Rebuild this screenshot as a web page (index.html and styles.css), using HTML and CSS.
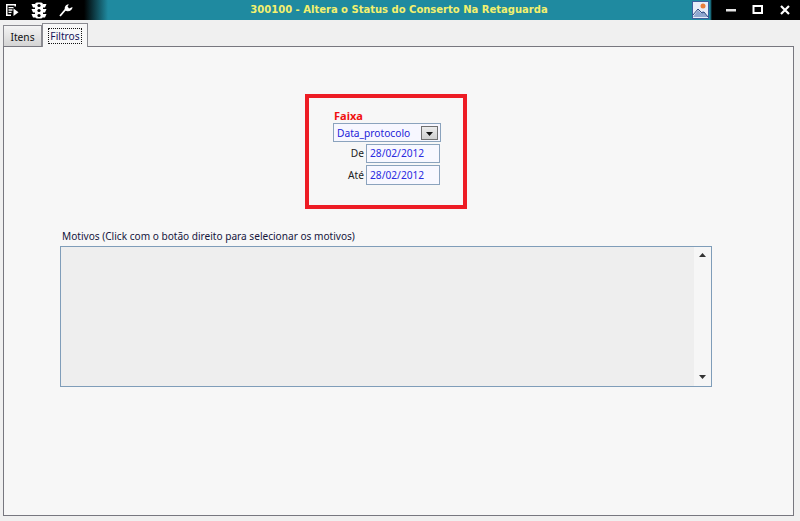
FILE: index.html
```html
<!DOCTYPE html>
<html lang="pt">
<head>
<meta charset="utf-8">
<title>300100 - Altera o Status do Conserto Na Retaguarda</title>
<link rel="stylesheet" href="styles.css">
</head>
<body>
<header class="titlebar">
  <div class="tools">
    <svg class="ico" width="14" height="14" viewBox="0 0 14 14"><path d="M1 1h10v2.500H9.500V2.500h-7v9H6V13H1z" fill="#fff"/><path d="M3.500 4.700h5M3.500 7h4M3.500 9.300h3" stroke="#fff" stroke-width="1.300"/><path d="M8.500 5.500l5 3.700-5 3.800z" fill="#fff"/></svg>
    <svg class="ico" width="16" height="17" viewBox="0 0 16 17"><rect x="4" y="0.500" width="8" height="16" rx="2" fill="#fff"/><path d="M0.500 2h3.500v3.500H2zM15.500 2H12v3.500h2zM0.500 7h3.500v3.500H2zM15.500 7H12v3.500h2zM0.500 12h3.500v3.500H2zM15.500 12H12v3.500h2z" fill="#fff"/><circle cx="8" cy="3.500" r="1.600" fill="#000"/><circle cx="8" cy="8.500" r="1.600" fill="#000"/><circle cx="8" cy="13.500" r="1.600" fill="#000"/></svg>
    <svg class="ico" width="14" height="14" viewBox="0 0 14 14"><path d="M1 13L6.500 6.500" stroke="#fff" stroke-width="1.800" fill="none"/><path d="M6 7.500C5 3.500 7 1 10 1.500L8.500 3.300 10 5.500 13.500 4C13.500 7 10.500 8.800 7.500 8z" fill="#fff"/></svg>
  </div>
  <h1 class="title">300100 - Altera o Status do Conserto Na Retaguarda</h1>
  <div class="winctl">
    <svg class="photo" width="17" height="18" viewBox="0 0 17 18"><rect x="0.500" y="0.500" width="16" height="17" fill="#e8eef8" stroke="#3b5f9c"/><path d="M1 16l5-7 3 3 2-2 5 6z" fill="#8fa8cf"/><path d="M1 14l5-6 4 4 2-1 4 5" fill="none" stroke="#2c4a80"/><circle cx="11" cy="5" r="2.500" fill="#e8803a"/></svg>
    <svg class="btn" width="12" height="12" viewBox="0 0 12 12"><rect x="1" y="5" width="10" height="2.500" fill="#e4e4e4"/></svg>
    <svg class="btn" width="12" height="12" viewBox="0 0 12 12"><rect x="1.500" y="2" width="8.500" height="7" fill="none" stroke="#fff" stroke-width="2"/></svg>
    <svg class="btn" width="12" height="12" viewBox="0 0 12 12"><path d="M2 2l8 8M10 2l-8 8" stroke="#fff" stroke-width="2.200"/></svg>
  </div>
</header>

<nav class="tabs">
  <div class="tab">Itens</div>
  <div class="tab tab-active"><span class="focus">Filtros</span></div>
</nav>

<main class="panel">
  <section class="range">
    <div class="range-title">Faixa</div>
    <div class="combo"><span>Data_protocolo</span><span class="combo-btn"><svg width="7" height="4" viewBox="0 0 7 4"><path d="M0 0h7L3.500 4z" fill="#111"/></svg></span></div>
    <div class="row"><label class="lbl">De</label><div class="date">28/02/2012</div></div>
    <div class="row row-last"><label class="lbl">Até</label><div class="date">28/02/2012</div></div>
  </section>
  <div class="motivos-label">Motivos (Click com o botão direito para selecionar os motivos)</div>
  <div class="motivos">
    <div class="list"></div>
    <div class="scroll">
      <svg width="7" height="4" viewBox="0 0 7 4"><path d="M3.500 0L7 4H0z" fill="#333"/></svg>
      <svg width="7" height="4" viewBox="0 0 7 4"><path d="M0 0h7L3.500 4z" fill="#333"/></svg>
    </div>
  </div>
</main>
</body>
</html>
```
FILE: styles.css
```css
* { box-sizing: border-box; }
html, body { margin: 0; height: 100%; }
body {
  width: 800px;
  height: 521px;
  overflow: hidden;
  background: #f0f0f0;
  font-family: "Noto Sans", sans-serif;
  font-size: 10.2px;
  color: #111;
  display: flex;
  flex-direction: column;
}
.titlebar {
  height: 20px;
  flex: none;
  display: flex;
  align-items: center;
  justify-content: space-between;
  background: linear-gradient(90deg, #000 0, #000 84px, #1f8aa0 108px, #1f8aa0 710px, #000 712px, #000 100%);
  position: relative;
}
.tools { display: flex; align-items: center; gap: 12px; padding-left: 5px; }
.ico { display: block; }
.title {
  position: absolute;
  left: 0;
  right: 2px;
  top: 3px;
  margin: 0;
  text-align: center;
  font-family: "DejaVu Sans", sans-serif;
  font-size: 10px;
  line-height: 14px;
  font-weight: 700;
  color: #f3f06e;
}
.winctl { display: flex; align-items: center; padding-right: 9px; }
.photo { margin-right: 1px; }
.btn { margin-left: 15px; }
.tabs {
  height: 26px;
  flex: none;
  display: flex;
  align-items: flex-end;
  padding-left: 3px;
  position: relative;
  z-index: 1;
}
.tab {
  width: 39px;
  height: 21px;
  border: 1px solid #8a8a90;
  border-bottom: 0;
  background: linear-gradient(#f4f4f4, #d4d4d4);
  display: flex;
  align-items: center;
  justify-content: center;
  padding-top: 2px;
}
.tab-active {
  width: 46px;
  height: 24px;
  background: #f7f7f7;
  position: relative;
  top: 1px;
  align-items: flex-start;
  padding-top: 4px;
  color: #14145a;
}
.focus { border: 1px dotted #111; padding: 0 1px; line-height: 14px; }
.panel {
  width: 791px;
  height: 470px;
  margin-left: 3px;
  flex: none;
  background: #f7f7f7;
  border: 1px solid #77777f;
  padding-top: 47px;
  display: flex;
  flex-direction: column;
}
.range {
  width: 162px;
  height: 115px;
  margin-left: 301px;
  border: 4px solid #ed1c24;
  padding: 12px 0 0 24px;
}
.range-title { color: #f01010; font-weight: 700; font-size: 11px; line-height: 12px; margin-bottom: 1px; padding-left: 1px; }
.combo {
  width: 108px;
  height: 19px;
  border: 1px solid #8ba3bd;
  background: #f7f7ff;
  color: #1c1cd8;
  display: flex;
  align-items: center;
  justify-content: space-between;
  padding: 0 2px 0 3px;
}
.combo-btn {
  width: 17px;
  height: 14px;
  border: 1px solid #707070;
  background: linear-gradient(#ececec, #cfcfcf);
  display: flex;
  align-items: center;
  justify-content: center;
  padding-top: 2px;
}
.row { display: flex; align-items: center; justify-content: flex-end; width: 107px; height: 19px; margin-top: 2px; gap: 2px; }
.row-last { height: 20px; }
.lbl { color: #222; position: relative; bottom: 1px; }
.row-last .lbl { bottom: 0; }
.date {
  width: 74px;
  height: 100%;
  border: 1px solid #8ba3bd;
  background: #f8f8ff;
  color: #2a2ae0;
  padding-left: 3px;
  line-height: 16px;
}
.row-last .date { line-height: 18px; }
.motivos-label { margin: 20px 0 0 58px; height: 16px; line-height: 14px; font-size: 10.1px; color: #15153c; }
.motivos {
  width: 652px;
  height: 141px;
  margin: 1px 0 0 56px;
  border: 1px solid #7f9db9;
  display: flex;
}
.list { flex: 1; background: #eeeeee; }
.scroll {
  width: 17px;
  background: #f6f6f6;
  display: flex;
  flex-direction: column;
  align-items: center;
  justify-content: space-between;
  padding: 6px 0 7px;
}
```
